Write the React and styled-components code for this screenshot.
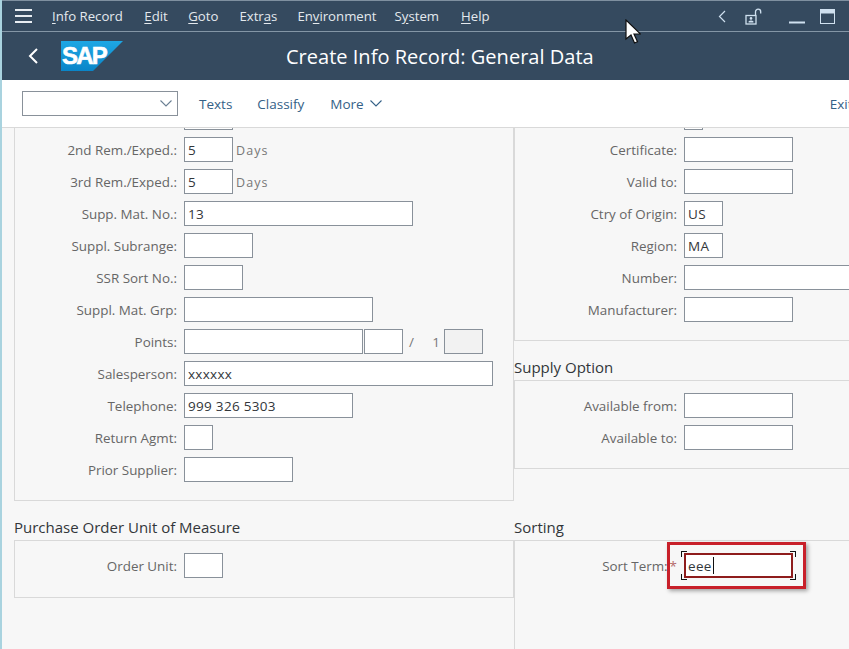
import React from 'react'
import styled, { createGlobalStyle } from 'styled-components'

const Global = createGlobalStyle`
  html, body { margin: 0; padding: 0; background: #f7f7f7; }
  #root { width: 849px; height: 649px; overflow: hidden; }
  * { box-sizing: border-box; }
`

const Shell = styled.div`
  position: relative;
  width: 849px;
  height: 649px;
  overflow: hidden;
  display: flex;
  flex-direction: column;
  border-left: 2px solid #a9d3df;
  font-family: "Open Sans", "Noto Sans", sans-serif;
  background: #f7f7f7;
`

const MenuBar = styled.div`
  height: 32px;
  flex: none;
  display: flex;
  align-items: center;
  background: #354a5f;
  border-top: 1px solid #7f90a0;
  border-bottom: 1px solid #8496a6;
  padding-left: 13px;
  color: #e4e9ee;
  font-size: 13.2px;
`

const Burger = styled.svg`
  width: 18px;
  height: 14px;
  margin-right: 19px;
  flex: none;
`

const MenuItem = styled.span`
  margin-right: ${p => p.$gap}px;
  white-space: nowrap;
  u { text-underline-offset: 2px; }
`

const WindowIcons = styled.div`
  margin-left: auto;
  display: flex;
  align-items: center;
  padding-right: 14px;
`

const WinIcon = styled.svg`
  display: block;
  flex: none;
  margin-right: ${p => p.$gap || 0}px;
  margin-top: ${p => p.$top || 0}px;
`

const TitleBar = styled.div`
  height: 48px;
  flex: none;
  display: flex;
  align-items: center;
  background: #354a5f;
  padding-left: 25px;
`

const BackIcon = styled.svg`
  width: 12px;
  height: 18px;
  margin-right: 22px;
  flex: none;
`

const Logo = styled.svg`
  width: 62px;
  height: 30px;
  flex: none;
  margin-bottom: 1px;
`

const Title = styled.h1`
  margin: 0 0 0 163px;
  font-size: 20.05px;
  font-weight: 400;
  color: #fff;
  white-space: nowrap;
`

const ToolBar = styled.div`
  height: 48px;
  flex: none;
  display: flex;
  align-items: center;
  background: #fff;
  border-bottom: 1px solid #d9d9d9;
  padding-left: 20px;
  color: #346187;
  font-size: 13.5px;
`

const Select = styled.div`
  width: 156px;
  height: 25px;
  flex: none;
  border: 1px solid #89919a;
  display: flex;
  align-items: center;
  justify-content: flex-end;
  padding-right: 5px;
  margin-right: 21px;
`

const ToolButton = styled.span`
  display: flex;
  flex: none;
  align-items: center;
  gap: 6px;
  margin-right: ${p => p.$gap || 0}px;
  white-space: nowrap;
`

const Chevron = styled.svg`
  width: 12px;
  height: 7px;
`

const Body = styled.div`
  flex: 1;
  min-height: 0;
  display: grid;
  grid-template-columns: 500px 1fr;
  padding-left: 12px;
`

const Column = styled.div`
  display: flex;
  flex-direction: column;
  min-width: 0;
`

const Panel = styled.section`
  height: ${p => (p.$height ? `${p.$height}px` : 'auto')};
  flex: ${p => (p.$height ? 'none' : 1)};
  border-left: 1px solid #d9d9d9;
  border-right: ${p => (p.$open ? 'none' : '1px solid #d9d9d9')};
  border-top: ${p => (p.$clipped ? 'none' : '1px solid #d9d9d9')};
  border-bottom: ${p => (p.$height ? '1px solid #d9d9d9' : 'none')};
  padding-top: ${p => (p.$clipped ? 0 : 12)}px;
`

const SectionHeader = styled.h2`
  height: ${p => p.$height}px;
  margin: 0;
  display: flex;
  align-items: flex-end;
  padding-bottom: 3px;
  font-size: 15px;
  font-weight: 400;
  color: #32363a;
`

const Row = styled.div`
  display: flex;
  align-items: center;
  height: 25px;
  margin-bottom: 7px;
`

const ClippedRow = styled.div`
  height: 2px;
  margin: 0 0 7px 169px;
  width: ${p => p.$width}px;
  border: 1px solid #89919a;
  border-top: none;
  background: #fff;
`

const Label = styled.label`
  width: 162px;
  margin-right: 7px;
  flex: none;
  text-align: right;
  font-size: 13.4px;
  color: #666;
  white-space: nowrap;
`

const Required = styled.span`
  color: #b56a6a;
  margin-left: 2px;
`

const Field = styled.div`
  position: relative;
  width: ${p => p.$width}px;
  height: 25px;
  flex: none;
  display: flex;
  align-items: center;
  padding-left: ${p => (p.$focus ? 2 : 3)}px;
  background: ${p => (p.$disabled ? '#f2f2f2' : '#fff')};
  border: ${p => (p.$focus ? '2px solid #8e1c1c' : '1px solid #89919a')};
  font-size: 13.5px;
  color: #32363a;
  letter-spacing: 0.3px;
`

const Unit = styled.span`
  margin: 1px 0 0 3px;
  font-size: 12.5px;
  letter-spacing: 1.1px;
  color: #777;
`

const Gap = styled.span`
  width: ${p => p.$width}px;
  flex: none;
`

const Counter = styled.span`
  font-size: 13.5px;
  color: #777;
  width: ${p => p.$width}px;
  text-align: right;
  flex: none;
`

const Caret = styled.span`
  width: 1px;
  height: 17px;
  margin-left: 1px;
  background: #111;
`

const Callout = styled.div`
  position: absolute;
  left: -19px;
  right: -15px;
  top: -13px;
  bottom: -13px;
  border: 3px solid #c8202a;
  box-shadow: 2px 2px 4px rgba(0, 0, 0, 0.35);
  pointer-events: none;
`

const Bracket = styled.span`
  position: absolute;
  width: 6px;
  height: 6px;
  ${p => p.$y}: -4px;
  ${p => p.$x}: -5px;
  border-${p => p.$y}: 1px solid #111;
  border-${p => p.$x}: 1px solid #111;
`

const Cursor = styled.svg`
  position: absolute;
  left: 623px;
  top: 19px;
  width: 16px;
  height: 26px;
`

const menu = [
  { hot: 'I', rest: 'nfo Record', gap: 21.5 },
  { hot: 'E', rest: 'dit', gap: 20.5 },
  { hot: 'G', rest: 'oto', gap: 21 },
  { pre: 'Extr', hot: 'a', rest: 's', gap: 20 },
  { pre: 'En', hot: 'v', rest: 'ironment', gap: 18 },
  { pre: 'S', hot: 'y', rest: 'stem', gap: 22 },
  { hot: 'H', rest: 'elp', gap: 0 },
]

const DownChevron = ({ color = '#346187' }) => (
  <Chevron viewBox="0 0 12 7" fill="none" stroke={color} strokeWidth="1.1">
    <path d="M0.5 0.5 6 6 11.5 0.5" />
  </Chevron>
)

const FormRow = ({ label, value, width, unit }) => (
  <Row>
    <Label>{label}</Label>
    <Field $width={width}>{value}</Field>
    {unit && <Unit>{unit}</Unit>}
  </Row>
)

export default function App() {
  return (
    <Shell>
      <Global />
      <MenuBar>
        <Burger viewBox="0 0 18 14" fill="#e8edf2">
          <rect y="0" width="17" height="2" />
          <rect y="6" width="17" height="2" />
          <rect y="12" width="17" height="2" />
        </Burger>
        {menu.map(m => (
          <MenuItem key={m.rest} $gap={m.gap}>
            {m.pre}<u>{m.hot}</u>{m.rest}
          </MenuItem>
        ))}
        <WindowIcons>
          <WinIcon $gap={19} width="8" height="13" viewBox="0 0 8 13" fill="none" stroke="#cfe0ef" strokeWidth="1.2">
            <path d="M7 1 1.5 6.5 7 12" />
          </WinIcon>
          <WinIcon $gap={27} width="17" height="17" viewBox="0 0 17 17" fill="none" stroke="#cfe0ef" strokeWidth="1.3">
            <rect x="1" y="7.5" width="10" height="8.5" />
            <path d="M10.5 7V3.8a2.6 2.6 0 0 1 5.2 0v1.7" />
            <circle cx="6" cy="10.4" r="1.3" fill="#cfe0ef" stroke="none" />
            <path d="M3.6 14.5h4.8v-1.2c-1-1-3.8-1-4.8 0z" fill="#cfe0ef" stroke="none" />
          </WinIcon>
          <WinIcon $gap={15} $top={13} width="16" height="3" viewBox="0 0 16 3" fill="#cfe0ef">
            <rect width="16" height="2" y="0.5" />
          </WinIcon>
          <WinIcon width="15" height="15" viewBox="0 0 15 15" fill="none" stroke="#cfe0ef" strokeWidth="1">
            <rect x="0.5" y="0.5" width="14" height="14" />
            <rect x="0.5" y="0.5" width="14" height="3.5" fill="#cfe0ef" />
          </WinIcon>
        </WindowIcons>
      </MenuBar>

      <TitleBar>
        <BackIcon viewBox="0 0 12 18" fill="none" stroke="#fff" strokeWidth="2">
          <path d="M10 2 3 9l7 7" />
        </BackIcon>
        <Logo viewBox="0 0 62 30">
          <defs>
            <linearGradient id="sapBlue" x1="0" y1="0" x2="0" y2="1">
              <stop offset="0" stopColor="#1ea7e4" />
              <stop offset="1" stopColor="#0a85c8" />
            </linearGradient>
          </defs>
          <polygon points="0,0 62,0 32,30 0,30" fill="url(#sapBlue)" />
          <text x="1" y="23" fontFamily="Liberation Sans" fontWeight="700" fontSize="24" letterSpacing="-1.8" fill="#fff" stroke="#fff" strokeWidth="0.6">SAP</text>
        </Logo>
        <Title>Create Info Record: General Data</Title>
      </TitleBar>

      <ToolBar>
        <Select><DownChevron color="#6a7f93" /></Select>
        <ToolButton $gap={25}>Texts</ToolButton>
        <ToolButton $gap={26}>Classify</ToolButton>
        <ToolButton $gap={448}>More <DownChevron /></ToolButton>
        <ToolButton>Exit</ToolButton>
      </ToolBar>

      <Body>
        <Column>
          <Panel $clipped $height={373}>
            <ClippedRow $width={49} />
            <FormRow label="2nd Rem./Exped.:" value="5" width={49} unit="Days" />
            <FormRow label="3rd Rem./Exped.:" value="5" width={49} unit="Days" />
            <FormRow label="Supp. Mat. No.:" value="13" width={229} />
            <FormRow label="Suppl. Subrange:" width={69} />
            <FormRow label="SSR Sort No.:" width={59} />
            <FormRow label="Suppl. Mat. Grp:" width={189} />
            <Row>
              <Label>Points:</Label>
              <Field $width={179} />
              <Gap $width={1} />
              <Field $width={39} />
              <Counter $width={11}>/</Counter>
              <Counter $width={26}>1</Counter>
              <Gap $width={4} />
              <Field $width={39} $disabled />
            </Row>
            <FormRow label="Salesperson:" value="xxxxxx" width={309} />
            <FormRow label="Telephone:" value="999 326 5303" width={169} />
            <FormRow label="Return Agmt:" width={29} />
            <FormRow label="Prior Supplier:" width={109} />
          </Panel>
          <SectionHeader $height={39}>Purchase Order Unit of Measure</SectionHeader>
          <Panel $height={58}>
            <FormRow label="Order Unit:" width={39} />
          </Panel>
        </Column>

        <Column>
          <Panel $clipped $open $height={213}>
            <ClippedRow $width={19} />
            <FormRow label="Certificate:" width={109} />
            <FormRow label="Valid to:" width={109} />
            <FormRow label="Ctry of Origin:" value="US" width={39} />
            <FormRow label="Region:" value="MA" width={39} />
            <FormRow label="Number:" width={200} />
            <FormRow label="Manufacturer:" width={109} />
          </Panel>
          <SectionHeader $height={39}>Supply Option</SectionHeader>
          <Panel $open $height={89}>
            <FormRow label="Available from:" width={109} />
            <FormRow label="Available to:" width={109} />
          </Panel>
          <SectionHeader $height={71}>Sorting</SectionHeader>
          <Panel $open>
            <Row>
              <Label>Sort Term:<Required>*</Required></Label>
              <Field $width={109} $focus>
                eee<Caret />
                <Bracket $y="top" $x="left" />
                <Bracket $y="top" $x="right" />
                <Bracket $y="bottom" $x="left" />
                <Bracket $y="bottom" $x="right" />
                <Callout />
              </Field>
            </Row>
          </Panel>
        </Column>
      </Body>

      <Cursor viewBox="0 0 16 26">
        <path d="M1 1v19l5-4 3.5 8 3-1.3-3.5-7.7h6.5z" fill="#fff" stroke="#111" strokeWidth="1.2" />
      </Cursor>
    </Shell>
  )
}
